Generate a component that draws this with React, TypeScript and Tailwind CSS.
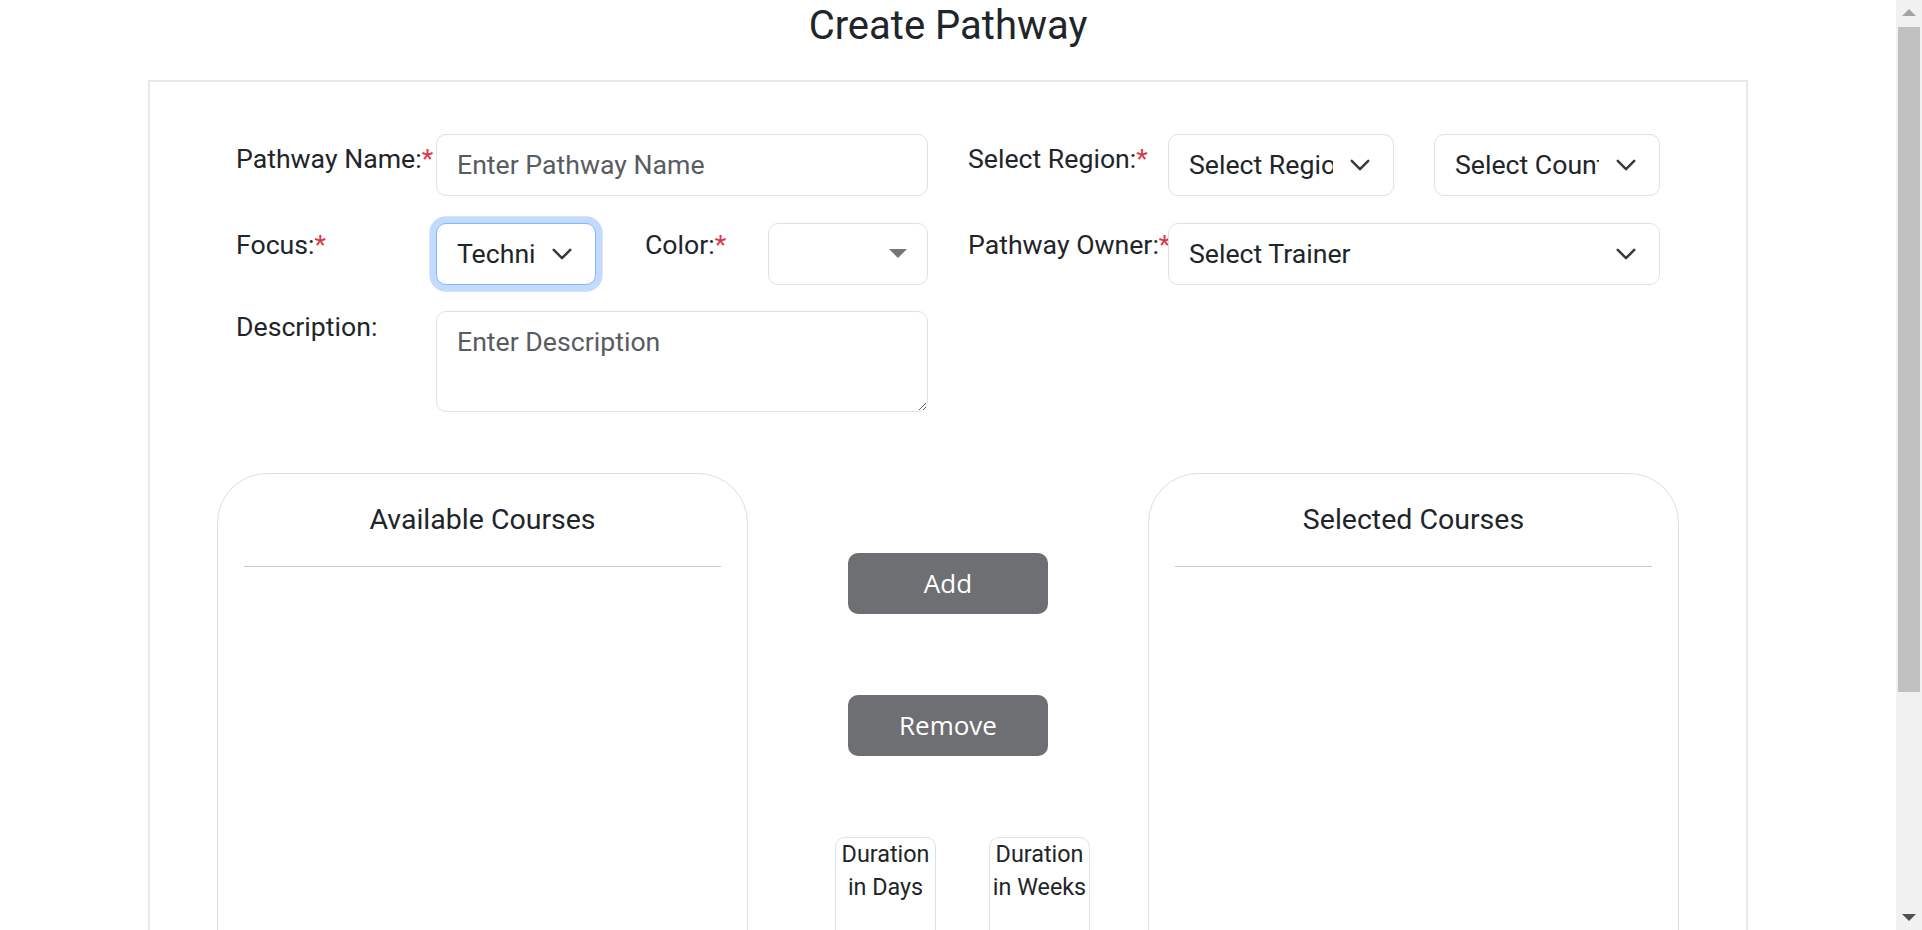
import React from "react";

const Chevron = () => (
  <svg viewBox="0 0 16 16" className="w-[22px] h-[22px] shrink-0" fill="none" stroke="#343a40" strokeWidth={1.8} strokeLinecap="round" strokeLinejoin="round">
    <path d="m2 5 6 6 6-6" />
  </svg>
);

function Label({ text, req, w, pad }: { text: string; req?: boolean; w: string; pad: string }) {
  return (
    <div className={`${w} ${pad} shrink-0 whitespace-nowrap text-[26.67px] leading-[40px] text-[#212529]`}>
      {text}
      {req && <span className="text-[#dc3545]">*</span>}
    </div>
  );
}

function Select({ text, w, focus }: { text: string; w: string; focus?: boolean }) {
  return (
    <div
      className={`${w} shrink-0 h-[62px] flex items-center rounded-[10px] border bg-white pl-[20px] pr-[22px] ${
        focus ? "border-[#86b7fe] shadow-[0_0_0_6.67px_rgba(13,110,253,0.25)]" : "border-[#dee2e6]"
      }`}
    >
      <span className="flex-1 min-w-0 overflow-hidden whitespace-nowrap text-[26.67px] leading-[40px] text-[#212529] mr-[16px]">
        {text}
      </span>
      <Chevron />
    </div>
  );
}

function ScrollBar() {
  return (
    <div className="w-[26px] h-screen shrink-0 bg-[#f1f1f1] flex flex-col">
      <div className="h-[25px] flex items-center justify-center">
        <svg viewBox="0 0 14 7" className="w-[14px] h-[7px]">
          <path d="M0 7 L7 0 L14 7 Z" fill="#a3a3a3" />
        </svg>
      </div>
      <div className="mx-[2px] mt-[2px] h-[665px] bg-[#c1c1c1]" />
      <div className="flex-1" />
      <div className="h-[25px] flex items-center justify-center">
        <svg viewBox="0 0 14 7" className="w-[14px] h-[7px]">
          <path d="M0 0 L14 0 L7 7 Z" fill="#505050" />
        </svg>
      </div>
    </div>
  );
}

export default function App() {
  return (
    <div className="flex h-screen overflow-hidden bg-white">
      <div className="flex-1 min-w-0 overflow-hidden font-['Roboto',sans-serif] text-[#212529] pb-[63px]">
        <h1 className="pt-[2px] text-center text-[40px] leading-[48px] font-normal text-[#212529]">Create Pathway</h1>

        <div className="mx-auto mt-[30px] w-[1600px] border-2 border-[#e4e7eb] pt-[52px] pb-[52px]">
          <div className="mx-auto w-[1424px] grid grid-cols-[692px_692px] gap-x-[40px] gap-y-[26.67px]">
            {/* row 1 */}
            <div className="flex">
              <Label text="Pathway Name:" req w="w-[200px]" pad="pt-[5px]" />
              <input
                readOnly
                placeholder="Enter Pathway Name"
                className="w-[492px] h-[62px] rounded-[10px] border border-[#dee2e6] bg-white px-[20px] text-[26.67px] text-[#212529] outline-none placeholder:text-[#595c5f]"
              />
            </div>
            <div className="flex">
              <Label text="Select Region:" req w="w-[200px]" pad="pt-[5px]" />
              <Select text="Select Region" w="w-[226px]" />
              <div className="w-[40px] shrink-0" />
              <Select text="Select Country" w="w-[226px]" />
            </div>

            {/* row 2 */}
            <div className="flex">
              <Label text="Focus:" req w="w-[200px]" pad="pt-[2px]" />
              <Select text="Technical" w="w-[160px]" focus />
              <div className="w-[49px] shrink-0" />
              <Label text="Color:" req w="w-[123px]" pad="pt-[2px]" />
              <div className="w-[160px] h-[62px] shrink-0 flex items-center justify-end pr-[20px] rounded-[10px] border border-[#dee2e6] bg-white">
                <svg viewBox="0 0 18 9" className="w-[18px] h-[9px]">
                  <path d="M0 0 H18 L9 9 Z" fill="#767676" />
                </svg>
              </div>
            </div>
            <div className="flex">
              <Label text="Pathway Owner:" req w="w-[200px]" pad="pt-[2px]" />
              <Select text="Select Trainer" w="w-[492px]" />
            </div>

            {/* row 3 */}
            <div className="flex">
              <Label text="Description:" w="w-[200px]" pad="-mt-[4px]" />
              <textarea
                readOnly
                rows={2}
                placeholder="Enter Description"
                className="w-[492px] h-[101px] rounded-[10px] border border-[#dee2e6] bg-white px-[20px] py-[10px] text-[26.67px] leading-[40px] text-[#212529] outline-none placeholder:text-[#595c5f]"
              />
            </div>
            <div />
          </div>

          <div className="mt-[61px] flex justify-center">
            <div className="w-[531px] h-[640px] shrink-0 rounded-[50px] border border-[#dedede] flex flex-col">
              <div className="pt-[26px] text-center text-[28.5px] leading-[40px] text-[#212529]">Available Courses</div>
              <div className="mx-[26px] mt-[26px] border-t border-[#c8c8c8]" />
            </div>

            <div className="w-[400px] shrink-0 flex flex-col">
              <button className="mt-[80px] self-center w-[200px] h-[61px] rounded-[10px] bg-[#6e6f73] text-white text-[26px] font-['Open_Sans',sans-serif]">
                Add
              </button>
              <button className="mt-[81px] self-center w-[200px] h-[61px] rounded-[10px] bg-[#6e6f73] text-white text-[26px] font-['Open_Sans',sans-serif]">
                Remove
              </button>
              <div className="mt-[81px] flex pl-[87px] gap-[53px]">
                <div className="w-[101px] h-[140px] rounded-[10px] border border-[#dee2e6] text-center text-[23.33px] leading-[32.7px] text-[#212529]">
                  Duration
                  <br />
                  in Days
                </div>
                <div className="w-[101px] h-[140px] rounded-[10px] border border-[#dee2e6] text-center text-[23.33px] leading-[32.7px] text-[#212529]">
                  Duration
                  <br />
                  in Weeks
                </div>
              </div>
            </div>

            <div className="w-[531px] h-[640px] shrink-0 rounded-[50px] border border-[#dedede] flex flex-col">
              <div className="pt-[26px] text-center text-[28.5px] leading-[40px] text-[#212529]">Selected Courses</div>
              <div className="mx-[26px] mt-[26px] border-t border-[#c8c8c8]" />
            </div>
          </div>
        </div>
      </div>
      <ScrollBar />
    </div>
  );
}
